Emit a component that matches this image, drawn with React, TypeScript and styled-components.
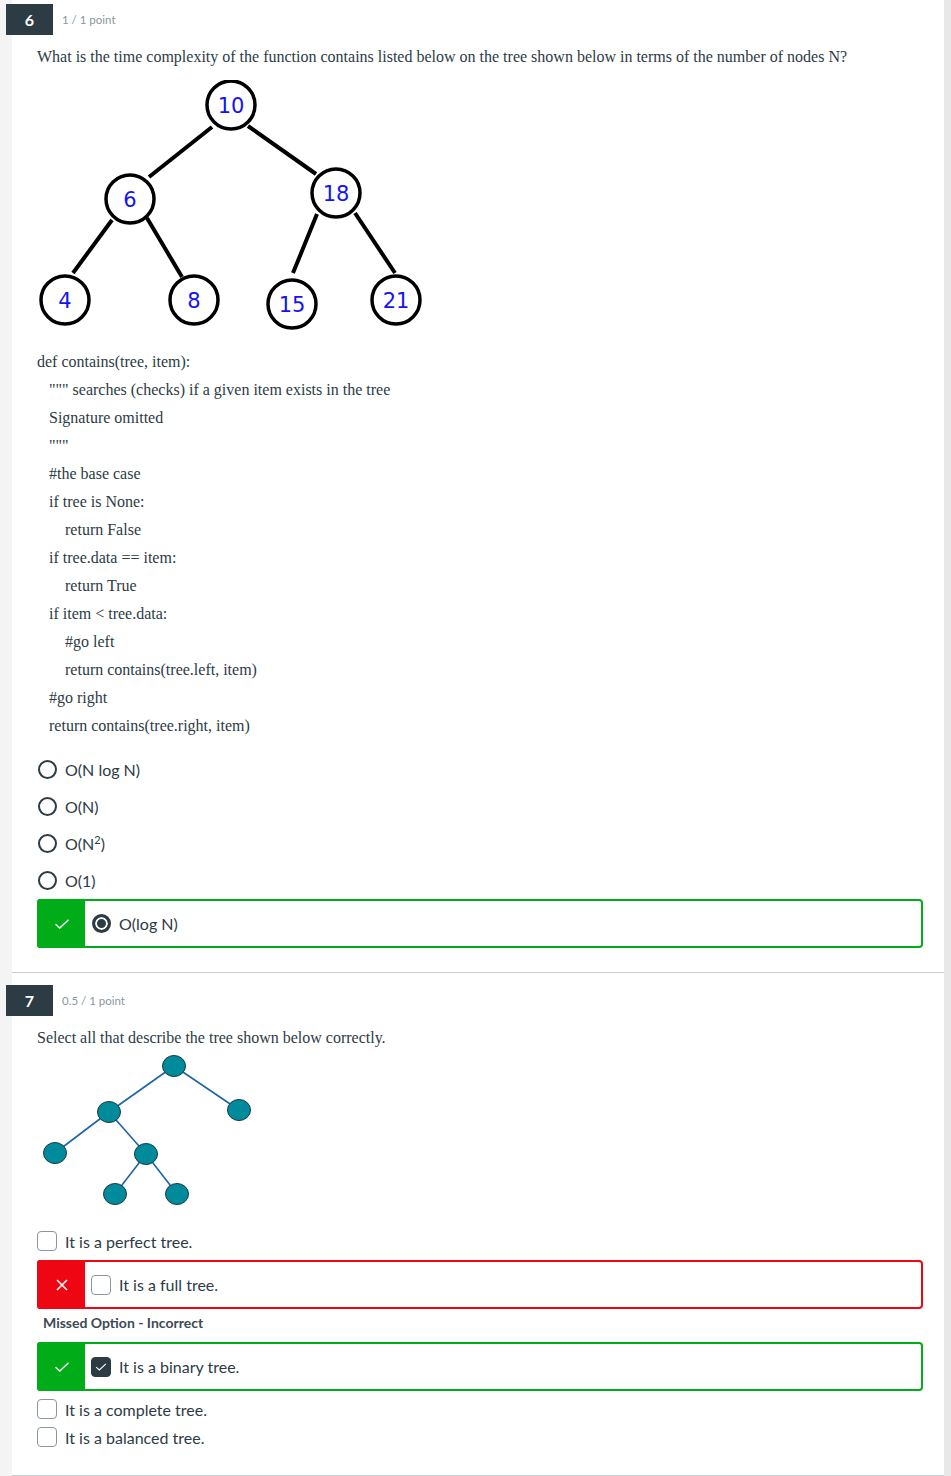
import styled, { createGlobalStyle } from 'styled-components'

const GlobalStyle = createGlobalStyle`
  body {
    margin: 0;
    background: #ffffff;
    font-family: Lato, "Liberation Sans", sans-serif;
    color: #2d3b45;
  }
`

const Page = styled.div`
  display: flex;
  min-height: 1476px;
`

const Gutter = styled.div<{ $width?: number; $tone: string }>`
  flex: ${p => (p.$width ? `0 0 ${p.$width}px` : '1')};
  background: ${p => p.$tone};
`

const Main = styled.main`
  flex: 0 0 932px;
  background: #ffffff;
`

const Question = styled.section`
  padding: 4px 21px 24px 25px;
  border-bottom: 1px solid #c7cdd1;
  & + & {
    margin-top: 8px;
  }
`

const Header = styled.div`
  display: flex;
  align-items: center;
  gap: 9px;
  margin-left: -31px;
`

const Badge = styled.div`
  width: 47px;
  height: 31px;
  background: #2d3b45;
  color: #fff;
  display: flex;
  align-items: center;
  justify-content: center;
  font-size: 16px;
  font-weight: 700;
`

const Points = styled.span`
  font-size: 11.5px;
  color: #8b969e;
`

const Prompt = styled.p`
  margin: 11px 0 0;
  font-family: "Liberation Serif", serif;
  font-size: 16px;
  line-height: 22px;
  color: #2d3b45;
`

const Figure = styled.svg<{ $top: number }>`
  display: block;
  margin-top: ${p => p.$top}px;
`

const Code = styled.div`
  margin-top: 16px;
  font-family: "Liberation Serif", serif;
  font-size: 16px;
  line-height: 28px;
  color: #2d3b45;
`

const indents = [0, 12, 28]

const CodeLine = styled.div<{ $indent: number }>`
  padding-left: ${p => indents[p.$indent]}px;
  white-space: pre;
`

const Options = styled.div<{ $top: number }>`
  margin-top: ${p => p.$top}px;
  display: flex;
  flex-direction: column;
`

const Row = styled.div<{ $height: number }>`
  display: flex;
  align-items: center;
  gap: 8px;
  height: ${p => p.$height}px;
  font-size: 16px;
  color: #2d3b45;
  sup {
    font-size: 11px;
    line-height: 0;
  }
`

const Radio = styled.span<{ $on?: boolean }>`
  box-sizing: border-box;
  width: 19px;
  height: 19px;
  border-radius: 50%;
  border: ${p => (p.$on ? '3px' : '2px')} solid #2d3b45;
  background: ${p => (p.$on ? '#2d3b45' : '#fff')};
  box-shadow: ${p => (p.$on ? 'inset 0 0 0 2px #fff' : 'none')};
  margin-left: 1px;
  flex: none;
`

const Check = styled.span<{ $on?: boolean }>`
  box-sizing: border-box;
  width: 20px;
  height: 20px;
  border-radius: 4px;
  border: 1px solid ${p => (p.$on ? '#2d3b45' : '#8b969e')};
  background: ${p => (p.$on ? '#2d3b45' : '#fff')};
  display: flex;
  align-items: center;
  justify-content: center;
  flex: none;
`

const Result = styled.div<{ $tone: string; $gap: string }>`
  box-sizing: border-box;
  display: flex;
  align-items: center;
  height: 49px;
  margin: ${p => p.$gap};
  border: 2px solid ${p => p.$tone};
  border-radius: 4px;
  font-size: 16px;
`

const Flag = styled.div<{ $tone: string }>`
  align-self: stretch;
  width: 46px;
  margin: -2px 0 -2px -2px;
  border-radius: 3px 0 0 3px;
  background: ${p => p.$tone};
  display: flex;
  align-items: center;
  justify-content: center;
  padding-left: 2px;
`

const ResultBody = styled.div`
  display: flex;
  align-items: center;
  gap: 8px;
  padding-left: 6px;
`

const Note = styled.div`
  margin: 0 0 9px 6px;
  font-size: 14px;
  font-weight: 700;
  line-height: 20px;
  color: #3d4a54;
`

const Tick = ({ color = '#fff', size = 16 }: { color?: string; size?: number }) => (
  <svg width={size} height={size} viewBox="0 0 16 16">
    <path d="M1.5 8.2 L5.8 12 L14.5 3.8" fill="none" stroke={color} strokeWidth="1.4" />
  </svg>
)

const Cross = () => (
  <svg width="12" height="12" viewBox="0 0 12 12">
    <path d="M1 1 L11 11 M11 1 L1 11" fill="none" stroke="#fff" strokeWidth="1.6" />
  </svg>
)

const bstNodes = [
  { v: '10', x: 194, y: 25 },
  { v: '6', x: 93, y: 119 },
  { v: '18', x: 299, y: 113 },
  { v: '4', x: 28, y: 220 },
  { v: '8', x: 157, y: 220 },
  { v: '15', x: 255, y: 224 },
  { v: '21', x: 359, y: 220 },
]

const bstEdges = [
  [175, 47, 112, 97],
  [211, 46, 279, 94],
  [75, 140, 36, 193],
  [110, 138, 145, 197],
  [280, 134, 256, 193],
  [318, 133, 358, 193],
]

const BstFigure = () => (
  <Figure $top={12} width="390" height="252" viewBox="0 0 390 252">
    {bstEdges.map(([x1, y1, x2, y2], i) => (
      <line key={i} x1={x1} y1={y1} x2={x2} y2={y2} stroke="#000" strokeWidth="4" />
    ))}
    {bstNodes.map(n => (
      <g key={n.v}>
        <circle cx={n.x} cy={n.y} r="24" fill="#fff" stroke="#000" strokeWidth="3.5" />
        <text
          x={n.x}
          y={n.y + 8}
          textAnchor="middle"
          fontFamily="'DejaVu Sans', sans-serif"
          fontSize="21"
          fill="#1414f0"
        >
          {n.v}
        </text>
      </g>
    ))}
  </Figure>
)

const shapeNodes = [
  [137, 14],
  [72, 60],
  [202, 58],
  [18, 101],
  [109, 102],
  [78, 142],
  [140, 142],
]

const shapeEdges = [
  [0, 1],
  [0, 2],
  [1, 3],
  [1, 4],
  [4, 5],
  [4, 6],
]

const ShapeFigure = () => (
  <Figure $top={3} width="220" height="160" viewBox="0 0 220 160">
    {shapeEdges.map(([a, b], i) => (
      <line
        key={i}
        x1={shapeNodes[a][0]}
        y1={shapeNodes[a][1]}
        x2={shapeNodes[b][0]}
        y2={shapeNodes[b][1]}
        stroke="#1e64a8"
        strokeWidth="1.6"
      />
    ))}
    {shapeNodes.map(([x, y], i) => (
      <ellipse key={i} cx={x} cy={y} rx="11.5" ry="10.5" fill="#008b9c" stroke="#1c3a44" strokeWidth="1" />
    ))}
  </Figure>
)

const code: [number, string][] = [
  [0, 'def contains(tree, item):'],
  [1, '""" searches (checks) if a given item exists in the tree'],
  [1, 'Signature omitted'],
  [1, '"""'],
  [1, '#the base case'],
  [1, 'if tree is None:'],
  [2, 'return False'],
  [1, 'if tree.data == item:'],
  [2, 'return True'],
  [1, 'if item < tree.data:'],
  [2, '#go left'],
  [2, 'return contains(tree.left, item)'],
  [1, '#go right'],
  [1, 'return contains(tree.right, item)'],
]

export default function App() {
  return (
    <>
      <GlobalStyle />
      <Page>
        <Gutter $width={12} $tone="#f4f4f4" />
        <Main>
          <Question>
            <Header>
              <Badge>6</Badge>
              <Points>1 / 1 point</Points>
            </Header>
            <Prompt>
              What is the time complexity of the function contains listed below on the tree shown below in terms of
              the number of nodes N?
            </Prompt>
            <BstFigure />
            <Code>
              {code.map(([indent, text], i) => (
                <CodeLine key={i} $indent={indent}>
                  {text}
                </CodeLine>
              ))}
            </Code>
            <Options $top={11}>
              <Row $height={37}>
                <Radio />
                O(N log N)
              </Row>
              <Row $height={37}>
                <Radio />
                O(N)
              </Row>
              <Row $height={37}>
                <Radio />
                <span>
                  O(N<sup>2</sup>)
                </span>
              </Row>
              <Row $height={37}>
                <Radio />
                O(1)
              </Row>
              <Result $tone="#00ac18" $gap="0">
                <Flag $tone="#00ac18">
                  <Tick />
                </Flag>
                <ResultBody>
                  <Radio $on />
                  O(log N)
                </ResultBody>
              </Result>
            </Options>
          </Question>

          <Question>
            <Header>
              <Badge>7</Badge>
              <Points>0.5 / 1 point</Points>
            </Header>
            <Prompt>Select all that describe the tree shown below correctly.</Prompt>
            <ShapeFigure />
            <Options $top={15}>
              <Row $height={28}>
                <Check />
                It is a perfect tree.
              </Row>
              <Result $tone="#ee0612" $gap="5px 0 4px">
                <Flag $tone="#ee0612">
                  <Cross />
                </Flag>
                <ResultBody>
                  <Check />
                  It is a full tree.
                </ResultBody>
              </Result>
              <Note>Missed Option - Incorrect</Note>
              <Result $tone="#00ac18" $gap="0 0 4px">
                <Flag $tone="#00ac18">
                  <Tick />
                </Flag>
                <ResultBody>
                  <Check $on>
                    <Tick size={12} />
                  </Check>
                  It is a binary tree.
                </ResultBody>
              </Result>
              <Row $height={28}>
                <Check />
                It is a complete tree.
              </Row>
              <Row $height={28}>
                <Check />
                It is a balanced tree.
              </Row>
            </Options>
          </Question>
        </Main>
        <Gutter $tone="#e8e8e8" />
      </Page>
    </>
  )
}
